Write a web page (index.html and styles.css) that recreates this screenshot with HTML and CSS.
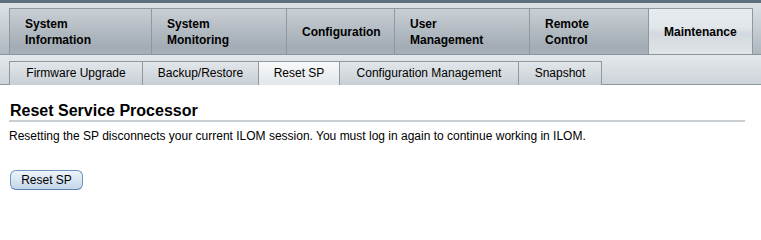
FILE: index.html
```html
<!DOCTYPE html>
<html lang="en">
<head>
<meta charset="utf-8">
<title>Reset Service Processor</title>
<link rel="stylesheet" href="styles.css">
</head>
<body>
<div class="topbar"></div>
<nav class="maintabs">
  <div class="maintab t1">System<br>Information</div>
  <div class="maintab t2">System<br>Monitoring</div>
  <div class="maintab t3">Configuration</div>
  <div class="maintab t4">User<br>Management</div>
  <div class="maintab t5">Remote<br>Control</div>
  <div class="maintab t6 active">Maintenance</div>
</nav>
<nav class="subtabs">
  <div class="subtab s1">Firmware Upgrade</div>
  <div class="subtab s2">Backup/Restore</div>
  <div class="subtab s3 active">Reset SP</div>
  <div class="subtab s4">Configuration Management</div>
  <div class="subtab s5">Snapshot</div>
</nav>
<main class="content">
  <h1 class="title">Reset Service Processor</h1>
  <p class="desc">Resetting the SP disconnects your current ILOM session. You must log in again to continue working in ILOM.</p>
  <button class="btn" type="button">Reset SP</button>
</main>
</body>
</html>
```

FILE: styles.css
```css
* { box-sizing: border-box; }
html, body { margin: 0; padding: 0; background: #ffffff; }
body {
  font-family: "Liberation Sans", Arial, sans-serif;
  color: #000;
  width: 761px;
  overflow: hidden;
}
.topbar {
  height: 3px;
  background: #5f6f7d;
}
.maintabs {
  display: flex;
  height: 52px;
  padding: 5px 0 0 9px;
  background: linear-gradient(#dce2e6, #c4cbd1 55%, #aeb7be);
  border-bottom: 1px solid #8b959d;
}
.maintab {
  height: 46px;
  display: flex;
  align-items: center;
  padding-left: 15px;
  font-weight: bold;
  font-size: 12px;
  line-height: 16px;
  border-top: 1px solid #8e989f;
  border-left: 1px solid #8e989f;
  background: linear-gradient(#c9cfd5, #b2bac1 50%, #a3acb4 85%, #a8b0b8);
}
.maintab.active {
  background: linear-gradient(#e7ecef, #e0e6e9 40%, #d3d9de 55%, #e0e5e8);
  border-right: 1px solid #8e989f;
}
.t1 { width: 142px; }
.t2 { width: 135px; }
.t3 { width: 108px; }
.t4 { width: 135px; }
.t5 { width: 119px; }
.t6 { width: 105px; }
.subtabs {
  display: flex;
  height: 30px;
  padding: 6px 0 0 9px;
  background: linear-gradient(#e3e8eb, #cdd4d9);
  border-bottom: 1px solid #8e989f;
}
.subtab {
  height: 24px;
  font-size: 12px;
  line-height: 23px;
  text-align: center;
  border-top: 1px solid #8e989f;
  border-left: 1px solid #8e989f;
  background: linear-gradient(#e1e6ea, #c8cfd4);
}
.subtab.active {
  background: linear-gradient(#f7f9fa, #e2e6e9);
}
.s1 { width: 133px; }
.s2 { width: 116px; }
.s3 { width: 81px; }
.s4 { width: 179px; }
.s5 { width: 84px; border-right: 1px solid #8e989f; }
.content {
  padding: 0 16px 0 9px;
}
.title {
  margin: 16px 0 0 0;
  padding: 0 0 0 1px;
  font-size: 16px;
  line-height: 19px;
  height: 21px;
  font-weight: bold;
  border-bottom: 2px solid #c9ced2;
}
.desc {
  margin: 7px 0 0 0;
  font-size: 12px;
  line-height: 14px;
}
.btn {
  display: block;
  margin: 27px 0 0 1px;
  width: 73px;
  height: 20px;
  padding: 0;
  font-family: "Liberation Sans", Arial, sans-serif;
  font-size: 12px;
  line-height: 18px;
  color: #000;
  border: 1px solid #6f93c2;
  border-bottom-color: #5a7fb0;
  border-radius: 6px;
  background: linear-gradient(#eef4fa, #dbe7f3 45%, #c3d6ea);
}
```
